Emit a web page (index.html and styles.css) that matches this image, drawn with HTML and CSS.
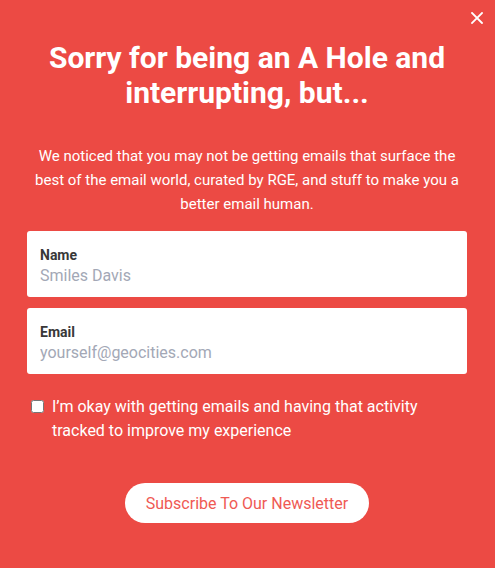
FILE: index.html
```html
<!DOCTYPE html>
<html lang="en">
<head>
<meta charset="utf-8">
<title>Newsletter</title>
<link rel="stylesheet" href="styles.css">
</head>
<body>
<div class="modal">
  <button class="close" aria-label="Close">
    <svg width="12" height="12" viewBox="0 0 12 12"><path d="M1 1L11 11M11 1L1 11" stroke="#fff" stroke-width="1.8" stroke-linecap="square"/></svg>
  </button>
  <h1 class="title">Sorry for being an A Hole and interrupting, but...</h1>
  <p class="intro">We noticed that you may not be getting emails that surface the best of the email world, curated by RGE, and stuff to make you a better email human.</p>
  <form class="form">
    <label class="field">
      <span class="field-label">Name</span>
      <input class="field-input" type="text" placeholder="Smiles Davis">
    </label>
    <label class="field">
      <span class="field-label">Email</span>
      <input class="field-input" type="email" placeholder="yourself@geocities.com">
    </label>
    <label class="consent">
      <input class="consent-box" type="checkbox">
      <span class="consent-text">I’m okay with getting emails and having that activity tracked to improve my experience</span>
    </label>
    <div class="actions">
      <button class="subscribe" type="button">Subscribe To Our Newsletter</button>
    </div>
  </form>
</div>
</body>
</html>
```

FILE: styles.css
```css
html, body {
  margin: 0;
  padding: 0;
  background: #ec4a44;
}
body {
  font-family: Roboto, "Liberation Sans", Arial, sans-serif;
  color: #fff;
  width: 495px;
  height: 568px;
  overflow: hidden;
}
.modal {
  position: relative;
  padding: 41px 28px 0 27px;
}
.close {
  position: absolute;
  top: 12px;
  right: 12px;
  width: 12px;
  height: 12px;
  padding: 0;
  border: 0;
  background: none;
  display: flex;
}
.title {
  margin: 0;
  text-align: center;
  font-size: 30px;
  font-weight: 700;
  line-height: 34.5px;
  padding: 0 12px;
}
.intro {
  margin: 34px 0 0;
  text-align: center;
  font-size: 15px;
  line-height: 24px;
  padding: 0 2px;
}
.form {
  margin-top: 15px;
  display: flex;
  flex-direction: column;
}
.field {
  display: flex;
  flex-direction: column;
  background: #fff;
  border-radius: 3px;
  padding: 15px 13px 10px;
}
.field + .field {
  margin-top: 11px;
}
.field-label {
  font-size: 14px;
  font-weight: 700;
  line-height: 18px;
  color: #383838;
}
.field-input {
  margin-top: 1px;
  border: 0;
  padding: 0;
  outline: none;
  font-family: inherit;
  font-size: 16px;
  line-height: 22px;
  height: 22px;
  color: #333;
  background: transparent;
}
.field-input::placeholder {
  color: #a3a8b6;
}
.consent {
  margin-top: 21px;
  display: flex;
  align-items: flex-start;
}
.consent-box {
  width: 13px;
  height: 13px;
  margin: 5px 8px 0 4px;
  flex: none;
}
.consent-text {
  font-size: 16px;
  line-height: 24px;
}
.actions {
  margin-top: 40px;
  display: flex;
  justify-content: center;
}
.subscribe {
  height: 40px;
  padding: 0 21px;
  border: 0;
  border-radius: 20px;
  background: #fff;
  color: #ef5a54;
  font-family: inherit;
  font-size: 16px;
}
```
